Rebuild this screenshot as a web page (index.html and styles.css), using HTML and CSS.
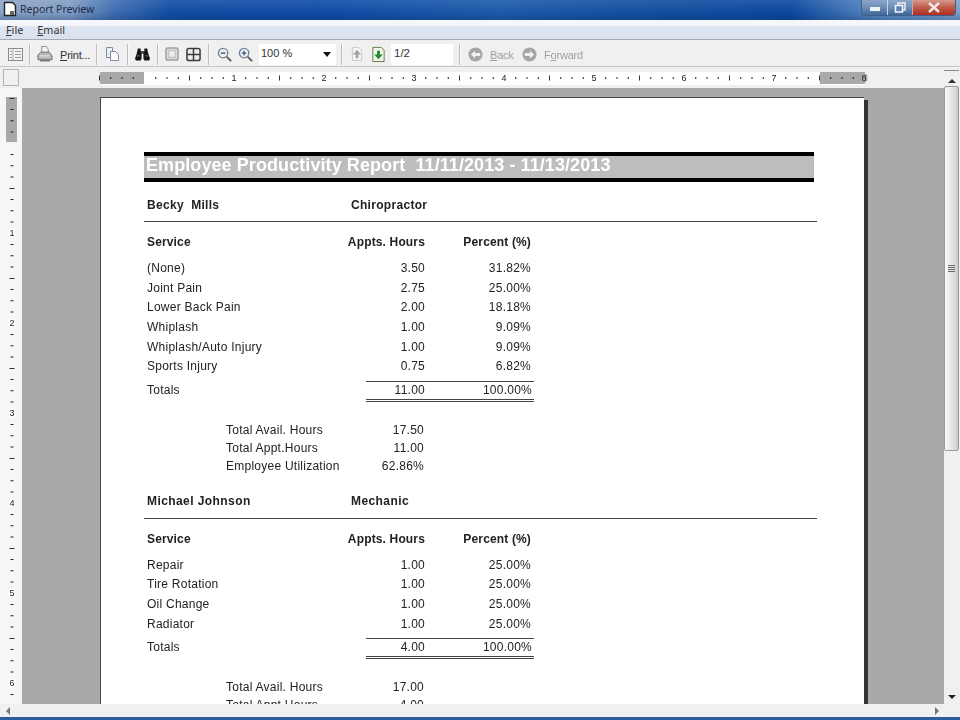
FILE: index.html
```html
<!DOCTYPE html>
<html lang="en">
<head>
<meta charset="utf-8">
<title>Report Preview</title>
<link rel="stylesheet" href="styles.css">
</head>
<body>
<div class="app">
  <header class="titlebar">
    <svg class="app-icon" width="14" height="16" viewBox="0 0 14 16"><path d="M1.5 1.5h8l3 3v10h-11z" fill="#fff" stroke="#222" stroke-width="1.4"/><rect x="7" y="10" width="4" height="4" fill="#666"/></svg>
    <span class="caption">Report Preview</span>
    <div class="winbtns">
      <div class="winbtn min"><span class="min-glyph"></span></div>
      <div class="winbtn max"><svg width="12" height="11" viewBox="0 0 12 11"><rect x="4" y="1" width="7" height="7" fill="none" stroke="#e8eef6" stroke-width="1.5"/><rect x="1.5" y="3.5" width="7" height="6.5" fill="#5f84ac" stroke="#f4f7fb" stroke-width="1.5"/></svg></div>
      <div class="winbtn close"><svg width="14" height="11" viewBox="0 0 14 11"><path d="M2 1l10 9M12 1L2 10" stroke="#f3e6e2" stroke-width="2.6"/></svg></div>
    </div>
  </header>

  <nav class="menubar">
    <span class="menu"><u>F</u>ile</span>
    <span class="menu"><u>E</u>mail</span>
  </nav>

  <div class="toolbar">
    <svg class="ic i-outline" width="15" height="13" viewBox="0 0 15 13"><rect x=".5" y=".5" width="14" height="12" fill="#f2f2f2" stroke="#8a8a8a"/><path d="M5 1v11" stroke="#aaa"/><path d="M7 3.500h6M7 6.500h6M7 9.500h6M2 3.500h2M2 6.500h2M2 9.500h2" stroke="#9c9c9c"/></svg>
    <i class="sep"></i>
    <svg class="ic i-print" width="16" height="18" viewBox="0 0 17 18"><path d="M5 1h5l2 3v5H5z" fill="#f4f4f4" stroke="#8a8a8a"/><path d="M1 10l3-3h9l3 4v4H1z" fill="#b8b8b8" stroke="#6e6e6e"/><path d="M3 15h11v2H3z" fill="#7c7c7c"/><path d="M3 11h10" stroke="#eee"/></svg>
    <span class="tlabel t-print"><u>P</u>rint...</span>
    <i class="sep s-print"></i>
    <svg class="ic i-copy" width="15" height="16" viewBox="0 0 15 16"><path d="M1.500 1.500h6v10h-6z" fill="#e8eef5" stroke="#7d8ea5"/><path d="M5.500 5.500h5l3 3v6h-8z" fill="#fff" stroke="#7d8ea5"/></svg>
    <i class="sep"></i>
    <svg class="ic i-bino" width="15" height="14" viewBox="0 0 16 14"><path d="M3 1h3v3h4V1h3l1 5 2 6-1 2H10l-1-2V7H7v5l-1 2H1l-1-2 2-6z" fill="#141414"/><path d="M7 5h2v2H7z" fill="#666"/><path d="M2 9h3M11 9h3" stroke="#777"/></svg>
    <i class="sep"></i>
    <svg class="ic i-single" width="14" height="14" viewBox="0 0 15 15"><rect x="1" y="1" width="13" height="13" rx="2" fill="#d8d8d8" stroke="#a0a0a0" stroke-width="1.500"/><rect x="4" y="4" width="7" height="7" fill="#ececec" stroke="#bcbcbc"/></svg>
    <svg class="ic i-double" width="15" height="15" viewBox="0 0 16 15"><rect x="1" y="1" width="14" height="13" rx="2" fill="#ececec" stroke="#3c3c3c" stroke-width="1.600"/><path d="M8 1v13M1 7.500h14" stroke="#3c3c3c" stroke-width="1.600"/></svg>
    <i class="sep"></i>
    <svg class="ic i-zout" width="15" height="15" viewBox="0 0 16 16"><circle cx="6.500" cy="6.500" r="5" fill="#eef3f8" stroke="#6f7f90" stroke-width="1.400"/><path d="M4 6.500h5" stroke="#444" stroke-width="1.400"/><path d="M10.500 10.500L15 15" stroke="#5a5a5a" stroke-width="2"/></svg>
    <svg class="ic i-zin" width="15" height="15" viewBox="0 0 16 16"><circle cx="6.500" cy="6.500" r="5" fill="#eef3f8" stroke="#6f7f90" stroke-width="1.400"/><path d="M4 6.500h5M6.500 4v5" stroke="#3b5a80" stroke-width="1.400"/><path d="M10.500 10.500L15 15" stroke="#5a5a5a" stroke-width="2"/></svg>
    <div class="combo"><span>100 %</span><i class="combo-arrow"></i></div>
    <i class="sep s-combo"></i>
    <svg class="ic i-up" width="12" height="16" viewBox="0 0 13 17"><path d="M1.500 1.500h7l3 3v11h-10z" fill="#f5f5f5" stroke="#c8c8c8"/><path d="M6.500 4L11 9H8v4H5V9H2z" fill="#a5a5a5"/></svg>
    <svg class="ic i-down" width="13" height="16" viewBox="0 0 13 17"><path d="M.5 1.500h9l3 3v12H.5z" fill="#f1f5ea" stroke="#5a7a4a"/><path d="M6.500 14L2 9h3V5h3v4h3z" fill="#1f8a2e"/></svg>
    <div class="pagebox">1/2</div>
    <i class="sep s-page"></i>
    <svg class="ic i-back" width="15" height="15" viewBox="0 0 16 16"><circle cx="8" cy="8" r="7.500" fill="#a6a6a6"/><path d="M3 8l4.500-4v2.500H13v3H7.500V12z" fill="#f2f2f2"/></svg>
    <span class="tlabel off t-back"><u>B</u>ack</span>
    <svg class="ic i-fwd" width="15" height="15" viewBox="0 0 16 16"><circle cx="8" cy="8" r="7.500" fill="#a6a6a6"/><path d="M13 8L8.500 4v2.500H3v3h5.500V12z" fill="#f2f2f2"/></svg>
    <span class="tlabel off t-fwd">F<u>o</u>rward</span>
  </div>

  <div class="workspace">
    <div class="main">
      <div class="hruler-row">
        <div class="corner"></div>
        <svg class="hruler" width="922" height="21" viewBox="22 67 922 21">
          <rect x="100" y="72" width="765" height="13" fill="#fff"/>
          <rect x="100" y="72" width="44" height="12" fill="#a9a9a9"/>
          <rect x="820" y="72" width="45" height="12" fill="#a9a9a9"/>
          <line x1="110.250" x2="865" y1="78" y2="78" stroke="#222" stroke-width="2" stroke-dasharray="1 10.250 1 10.250 1 21.500"/>
          <line x1="99" x2="865" y1="78" y2="78" stroke="#333" stroke-width="5" stroke-dasharray="1 89"/>
          <g class="rnum">
            <text x="234" y="81">1</text><text x="324" y="81">2</text><text x="414" y="81">3</text><text x="504" y="81">4</text><text x="594" y="81">5</text><text x="684" y="81">6</text><text x="774" y="81">7</text><text class="on-grey" x="864" y="81">8</text>
          </g>
        </svg>
      </div>
      <div class="view">
        <svg class="vruler" width="22" height="616" viewBox="0 88 22 616">
          <rect x="6" y="97" width="11" height="45" fill="#a9a9a9"/>
          <line x1="12" x2="12" y1="109" y2="704" stroke="#222" stroke-width="3" stroke-dasharray="1 10.250 1 10.250 1 21.500"/>
          <line x1="12" x2="12" y1="98" y2="704" stroke="#333" stroke-width="5" stroke-dasharray="1 89"/>
          <g class="rnum">
            <text x="12" y="236">1</text><text x="12" y="326">2</text><text x="12" y="416">3</text><text x="12" y="506">4</text><text x="12" y="596">5</text><text x="12" y="686">6</text>
          </g>
        </svg>
        <div class="canvas">
          <article class="page">
            <h1 class="report-title">Employee Productivity Report  11/11/2013 - 11/13/2013</h1>

            <section class="staff">
              <div class="person"><span>Becky  Mills</span><span>Chiropractor</span></div>
              <div class="row head"><span>Service</span><span>Appts. Hours</span><span>Percent (%)</span></div>
              <div class="rows">
                <div class="row"><span>(None)</span><span>3.50</span><span>31.82%</span></div>
                <div class="row"><span>Joint Pain</span><span>2.75</span><span>25.00%</span></div>
                <div class="row"><span>Lower Back Pain</span><span>2.00</span><span>18.18%</span></div>
                <div class="row"><span>Whiplash</span><span>1.00</span><span>9.09%</span></div>
                <div class="row"><span>Whiplash/Auto Injury</span><span>1.00</span><span>9.09%</span></div>
                <div class="row"><span>Sports Injury</span><span>0.75</span><span>6.82%</span></div>
              </div>
              <div class="totals"><span>Totals</span><div class="total-vals"><span>11.00</span><span>100.00%</span></div></div>
              <dl class="summary">
                <div><dt>Total Avail. Hours</dt><dd>17.50</dd></div>
                <div><dt>Total Appt.Hours</dt><dd>11.00</dd></div>
                <div><dt>Employee Utilization</dt><dd>62.86%</dd></div>
              </dl>
            </section>

            <section class="staff">
              <div class="person"><span>Michael Johnson</span><span>Mechanic</span></div>
              <div class="row head"><span>Service</span><span>Appts. Hours</span><span>Percent (%)</span></div>
              <div class="rows">
                <div class="row"><span>Repair</span><span>1.00</span><span>25.00%</span></div>
                <div class="row"><span>Tire Rotation</span><span>1.00</span><span>25.00%</span></div>
                <div class="row"><span>Oil Change</span><span>1.00</span><span>25.00%</span></div>
                <div class="row"><span>Radiator</span><span>1.00</span><span>25.00%</span></div>
              </div>
              <div class="totals"><span>Totals</span><div class="total-vals"><span>4.00</span><span>100.00%</span></div></div>
              <dl class="summary">
                <div><dt>Total Avail. Hours</dt><dd>17.00</dd></div>
                <div><dt>Total Appt.Hours</dt><dd>4.00</dd></div>
              </dl>
            </section>
          </article>
        </div>
      </div>
    </div>
    <aside class="vbar">
      <i class="arrow up"></i>
      <div class="vthumb"><span class="grip"></span></div>
      <i class="arrow down"></i>
    </aside>
  </div>

  <div class="hbar">
    <i class="arrow left"></i>
    <i class="arrow right"></i>
  </div>
  <div class="taskstrip"></div>
</div>
</body>
</html>
```
FILE: styles.css
```css
* { box-sizing: border-box; }
html, body { margin: 0; padding: 0; }
body { width: 960px; height: 720px; overflow: hidden; font-family: "Liberation Sans", Arial, sans-serif; color: #222; background: #f0f0f0; }
.app { width: 960px; height: 720px; display: flex; flex-direction: column; overflow: hidden; filter: blur(.35px); }

/* title bar */
.titlebar { flex: 0 0 20px; height: 20px; display: flex; align-items: flex-start; padding: 1px 4px 0 3px;
  background:
    linear-gradient(180deg, rgba(255,255,255,.10), rgba(255,255,255,0) 60%, rgba(10,40,90,.25) 95%),
    linear-gradient(90deg, #8ea6c8 0, #7f9cc3 70px, #3e6db0 115px, #114da3 170px, #0f4ba6 320px, #1c5aa9 500px, #14509f 620px, #0b479f 790px, #5c8ac0 880px, #7ba2cc 960px); }
.app-icon { flex: none; }
.caption { margin-left: 3px; font: 10.500px/17px "Noto Sans", sans-serif; color: #1f2c44; }
.winbtns { margin-left: auto; display: flex; height: 16px; margin-top: -1px; border: 1px solid #3f5f88; border-top: 0; border-radius: 0 0 4px 4px; overflow: hidden; }
.winbtn { display: flex; align-items: center; justify-content: center; height: 15px; }
.winbtn.min { width: 25px; background: linear-gradient(180deg, #8ba7c8, #6d8db4 50%, #3e6899); }
.winbtn.max { width: 25px; background: linear-gradient(180deg, #8ba7c8, #6d8db4 50%, #3e6899); border-left: 1px solid #c8d5e4; }
.winbtn.close { width: 43px; background: linear-gradient(180deg, #d69a8c, #bf5a4a 50%, #b02c22); border-left: 1px solid #c8a8a8; }
.min-glyph { width: 10px; height: 4px; margin-top: 3px; background: #f0f4f9; }

/* menu */
.menubar { flex: 0 0 20px; display: flex; gap: 14px; padding: 2px 6px 0; border-bottom: 1px solid #a8abb2;
  background: linear-gradient(180deg, #f6f8fc 0, #f3f5fb 30%, #dde4f2 35%, #dae1ef 100%);
  font: 10.800px/15px "Noto Sans", sans-serif; color: #333; }

/* toolbar */
.toolbar { flex: 0 0 27px; display: flex; align-items: center; gap: 7px; padding: 2px 0 0 8px; border-bottom: 1px solid #c6c6c6; background: #f0f0f0; }
.ic { flex: none; display: block; }
.sep { flex: none; width: 1px; height: 21px; background: #bdbdbd; box-shadow: 1px 0 0 #fafafa; }
.i-outline { margin-right: -1px; }
.tlabel { margin-top: 2px; font-size: 11px; line-height: 14px; color: #333; letter-spacing: -.2px; white-space: nowrap; }
.tlabel.off { color: #a2a2a2; }
.t-print { width: 28px; }
.s-print { margin-left: 1px; }
.i-copy { margin-left: 1px; }
.i-zout { margin-left: 1px; }
.i-zin { margin-left: -1px; }
.combo { position: relative; flex: none; width: 77px; height: 21px; margin-left: -1px; background: #fff; padding: 2px; font-size: 11px; line-height: 14px; color: #333; }
.combo-arrow { position: absolute; right: 5px; top: 8px; border: 4px solid transparent; border-top: 5px solid #111; border-bottom: 0; }
.s-combo { margin-left: -2px; }
.i-up { margin-left: 2px; }
.i-down { margin-left: 2px; }
.pagebox { flex: none; width: 62px; height: 21px; margin-left: -1px; background: #fff; padding: 2px 3px; font-size: 11.500px; line-height: 14px; color: #333; }
.s-page { margin-left: -1px; }
.i-back { margin-left: 1px; }
.t-back { width: 24px; }
.i-fwd { margin-left: 1px; }

/* workspace */
.workspace { flex: 1; min-height: 0; display: flex; }
.main { flex: 1; min-width: 0; display: flex; flex-direction: column; }
.hruler-row { flex: 0 0 21px; display: flex; background: #f0f0f0; padding-left: 3px; }
.corner { flex: none; width: 16px; height: 17px; margin-top: 2px; margin-right: 3px; background: #f1f1f1; border: 1px solid #b4b4b4; }
.hruler { display: block; flex: none; }
.rnum text { font: 9px "Liberation Sans", sans-serif; fill: #222; text-anchor: middle; paint-order: stroke; stroke: #fff; stroke-width: 3px; }
.rnum text.on-grey { stroke: #a9a9a9; }
.view { flex: 1; min-height: 0; display: flex; }
.vruler { flex: none; display: block; background: #f6f6f6; }
.canvas { flex: 1; min-width: 0; overflow: hidden; background: #a9a9a9; padding: 9px 0 0 78px; }

/* report page */
.page { width: 764px; height: 900px; background: #fff; border-left: 1px solid #444; border-top: 1px solid #444; padding: 54px 0 0 43px; box-shadow: 4px 3px 0 #333; font-size: 12px; letter-spacing: .25px; color: #222; }
.report-title { margin: 0; width: 670px; height: 30px; padding-left: 2px; background: #bdbdbd; border-top: 4px solid #000; border-bottom: 4px solid #000; color: #fff; font-size: 18px; font-weight: 700; line-height: 18px; letter-spacing: .08px; white-space: pre; }
.staff { width: 673px; }
.staff + .staff { margin-top: 3.500px; }
.person { display: grid; grid-template-columns: 204px 1fr; padding: 15px 0 8px 3px; height: 40px; border-bottom: 1px solid #444; font-weight: 700; line-height: 16px; letter-spacing: .3px; white-space: pre; }
.staff + .staff .person { padding-top: 14px; padding-bottom: 9px; letter-spacing: .42px; }
.row { display: grid; grid-template-columns: 181px 97px 106px; padding-left: 3px; height: 19.700px; line-height: 19.700px; }
.row span + span { text-align: right; }
.head { height: 28px; margin-bottom: 9px; padding-top: 12px; font-weight: 700; line-height: 16px; letter-spacing: .15px; white-space: nowrap; }
.totals { display: grid; grid-template-columns: 219px 168px; padding-left: 3px; margin-top: 4px; }
.totals > span { line-height: 19px; }
.total-vals { display: grid; grid-template-columns: 59px 107px; height: 21px; border-top: 1px solid #444; border-bottom: 3px double #444; line-height: 17px; }
.total-vals span { text-align: right; }
.summary { margin: 19px 0 0 82px; width: 198px; }
.summary div { display: flex; justify-content: space-between; height: 18px; line-height: 19px; }
.summary dt, .summary dd { margin: 0; }

/* scrollbars */
.vbar { flex: 0 0 16px; display: flex; flex-direction: column; align-items: flex-start; padding-top: 3px; background: #f0f0f0; }
.vbar::before { content: ""; width: 15px; height: 1px; background: #8a8a8a; }
.arrow { display: block; flex: none; width: 0; height: 0; border: 4px solid transparent; }
.arrow.up { margin: 8px 0 0 4px; border-top: 0; border-bottom: 4px solid #333; }
.vthumb { flex: none; width: 15px; height: 365px; margin-top: 3px; display: flex; align-items: center; justify-content: center; border: 1px solid #9a9a9a; border-radius: 2px; background: linear-gradient(90deg, #fafafa 0, #eaeaea 40%, #dcdce0 75%, #c9c9cc 100%); }
.grip { width: 7px; height: 7px; background: repeating-linear-gradient(180deg, #666 0 1px, #e8e8e8 1px 2px); }
.arrow.down { margin: auto 0 5px 4px; border-bottom: 0; border-top: 4px solid #222; }
.hbar { flex: 0 0 13px; display: flex; align-items: center; justify-content: space-between; padding: 0 21px 0 6px; background: #f0f0f0; }
.arrow.left { border-left: 0; border-right: 4px solid #777; }
.arrow.right { border-right: 0; border-left: 4px solid #777; }
.taskstrip { flex: 0 0 3px; background: #2a5d9b; }
```
